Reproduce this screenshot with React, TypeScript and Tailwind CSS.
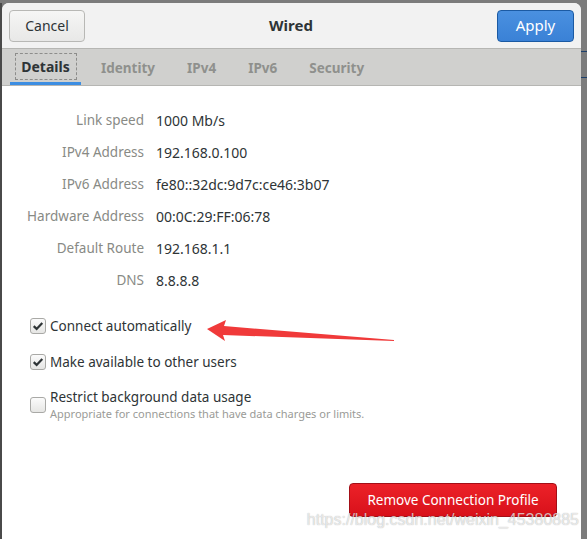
import React from "react";

const font = { fontFamily: '"Noto Sans", "Open Sans", sans-serif' };

const details: [string, string][] = [
  ["Link speed", "1000 Mb/s"],
  ["IPv4 Address", "192.168.0.100"],
  ["IPv6 Address", "fe80::32dc:9d7c:ce46:3b07"],
  ["Hardware Address", "00:0C:29:FF:06:78"],
  ["Default Route", "192.168.1.1"],
  ["DNS", "8.8.8.8"],
];

const tabs = ["Details", "Identity", "IPv4", "IPv6", "Security"];

const CheckBox: React.FC<{ checked?: boolean }> = ({ checked = false }) => (
  <span className="flex h-4 w-4 flex-shrink-0 items-center justify-center rounded-[3px] border border-[#a9a9a6] bg-gradient-to-b from-[#fbfbfb] to-[#e6e6e4]">
    {checked && (
      <svg viewBox="0 0 14 14" className="h-3 w-3">
        <path d="M2 7.2 L5.4 10.4 L12 3.4" fill="none" stroke="#2e3436" strokeWidth="2.6" />
      </svg>
    )}
  </span>
);

export default function App() {
  return (
    <div className="flex h-[539px] w-[587px] bg-[#7c7c7c] pt-[3px]" style={font}>
      <div className="w-[2px] flex-shrink-0 bg-[#4a4a4a]" />
      <div className="relative flex w-[579px] flex-shrink-0 flex-col overflow-hidden rounded-t-[7px] bg-white">
        {/* header bar */}
        <div className="flex h-[46px] items-center justify-between border-b border-[#b6b6b3] bg-[#f2f2f2] px-[7px]">
          <button className="h-8 w-[76px] rounded-[4px] border border-[#b8b8b5] bg-gradient-to-b from-[#f6f6f5] to-[#e8e8e7] text-[14px] text-[#2e3436]">
            Cancel
          </button>
          <span className="text-[15px] font-bold text-[#2e3436]">Wired</span>
          <button className="h-8 w-[77px] rounded-[4px] border border-[#1b5aa3] bg-gradient-to-b from-[#4a90e0] to-[#3a81d6] text-[15px] text-white">
            Apply
          </button>
        </div>

        {/* tab strip */}
        <div className="flex h-[37px] items-stretch border-b border-[#b6b6b3] bg-[#d0d0ce] pl-[8px]">
          {tabs.map((t, i) =>
            i === 0 ? (
              <div key={t} className="mr-[4px] flex w-[71px] flex-col items-center justify-end">
                <span className="mb-[2px] flex h-[27px] w-[62px] items-center justify-center border border-dashed border-[#8d8d8b] text-[14px] font-bold text-[#2e3436]">
                  {t}
                </span>
                <span className="h-[3px] w-full bg-[#3d8ee2]" />
              </div>
            ) : (
              <span key={t} className="flex items-center px-[16px] pt-[2px] text-[13.5px] font-bold text-[#8f908d]">
                {t}
              </span>
            )
          )}
        </div>

        {/* connection details */}
        <div className="flex flex-col pt-[18px]">
          {details.map(([k, v]) => (
            <div key={k} className="flex h-8 items-center">
              <span className="mt-[1px] w-[142px] text-right text-[13.5px] text-[#888a85]">{k}</span>
              <span className="ml-[12px] text-[14px] text-[#2e3436]">{v}</span>
            </div>
          ))}
        </div>

        {/* options */}
        <div className="mt-[18px] flex flex-col pl-[28px] text-[13.5px] text-[#2e3436]">
          <label className="flex h-6 items-center gap-[4px]">
            <CheckBox checked />
            <span className="mt-[1px]">Connect automatically</span>
          </label>
          <label className="mt-[12px] flex h-6 items-center gap-[4px]">
            <CheckBox checked />
            <span className="mt-[1px]">Make available to other users</span>
          </label>
          <label className="mt-[14px] flex items-center gap-[4px]">
            <CheckBox />
            <span className="flex flex-col leading-[18px]">
              <span>Restrict background data usage</span>
              <span className="text-[11px] leading-[15px] text-[#9a9b97]">
                Appropriate for connections that have data charges or limits.
              </span>
            </span>
          </label>
        </div>

        <div className="mt-auto flex justify-end pb-[22px] pr-[24px]">
          <button className="h-[34px] w-[208px] rounded-[4px] border border-[#a30f17] bg-gradient-to-b from-[#ec2128] to-[#d8101a] text-[13.5px] text-white">
            Remove Connection Profile
          </button>
        </div>

        {/* annotation arrow */}
        <svg className="absolute left-[202px] top-[316px]" width="195" height="26" viewBox="0 0 195 26">
          <path d="M3 10 L22 1 L20 7 L190 21 L190 22 L19 16 L21 22 Z" fill="#f03a3a" />
        </svg>

        {/* watermark */}
        <span className="absolute bottom-[7px] right-[2px] text-[16px] text-white/70 [text-shadow:0_0_1px_rgba(0,0,0,0.35)]" style={{ fontFamily: '"Liberation Sans", sans-serif' }}>
          https://blog.csdn.net/weixin_45380885
        </span>
      </div>
      <div className="flex flex-1 flex-col bg-[#7c7c7c]">
        <div className="mt-[48px] h-[1px] bg-[#1d3f6a]" />
        <div className="mt-[25px] h-[1px] bg-[#1d3f6a]" />
      </div>
    </div>
  );
}
